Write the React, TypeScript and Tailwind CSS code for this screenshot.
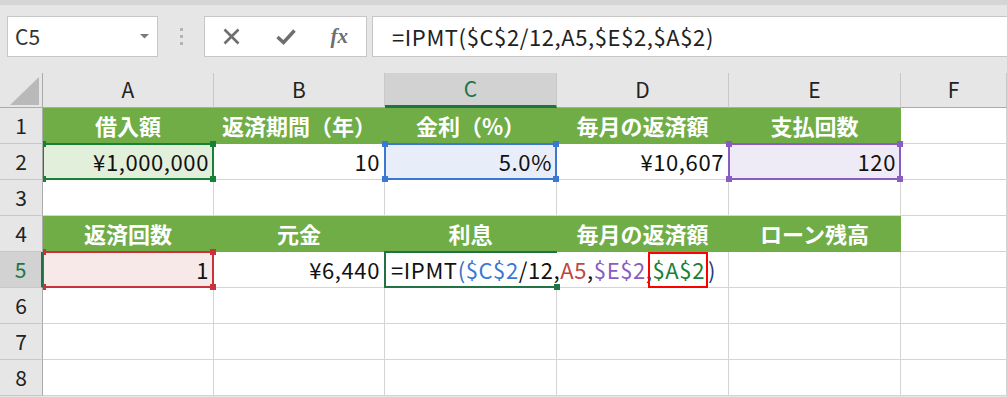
import React from "react";

const F = "font-['Noto_Sans_CJK_JP','Noto_Sans',sans-serif]";

function Handles({ bg }: { bg: string }) {
  const base = `absolute w-[6px] h-[6px] ${bg}`;
  return (
    <>
      <div className={`${base} -left-[4px] -top-[4px]`} />
      <div className={`${base} -right-[4px] -top-[4px]`} />
      <div className={`${base} -left-[4px] -bottom-[4px]`} />
      <div className={`${base} -right-[4px] -bottom-[4px]`} />
    </>
  );
}

function Sel({ border, bg }: { border: string; bg: string }) {
  return (
    <div className={`absolute -left-px -top-px -right-px -bottom-px border-2 z-10 pointer-events-none ${border}`}>
      <Handles bg={bg} />
    </div>
  );
}

function ColHead({ label, active }: { label: string; active?: boolean }) {
  return (
    <div
      className={`flex items-center justify-center text-[21px] border-r border-[#c8c8c8] ${
        active ? "bg-[#d2d2d2] text-[#217346] border-b-[3px] border-b-[#217346]" : "bg-[#e6e6e6] text-[#222] border-b border-b-[#ababab]"
      }`}
    >
      {label}
    </div>
  );
}

function RowHead({ n, active }: { n: number; active?: boolean }) {
  return (
    <div
      className={`relative z-20 flex items-center justify-center text-[21px] border-b border-[#c8c8c8] ${
        active ? "bg-[#d2d2d2] text-[#217346] border-r-2 border-r-[#217346]" : "bg-[#e6e6e6] text-[#222] border-r border-r-[#ababab]"
      }`}
    >
      {n}
    </div>
  );
}

function Green({ t }: { t: string }) {
  return (
    <div className="flex items-center justify-center bg-[#70ad47] border-r border-[#70ad47] border-b border-b-[#70ad47] text-white font-bold text-[22px]">
      {t}
    </div>
  );
}

function Cell({ t, cls = "", children }: { t?: string; cls?: string; children?: React.ReactNode }) {
  return (
    <div className={`relative flex items-center justify-end pr-[4px] text-[22px] tracking-[0.6px] text-[#111] border-r border-b border-[#d4d4d4] ${cls || "bg-white"}`}>
      {t}
      {children}
    </div>
  );
}

function Empty({ cls = "" }: { cls?: string }) {
  return <div className={`bg-white border-r border-b border-[#d4d4d4] ${cls}`} />;
}

export default function App() {
  return (
    <div className={`w-[1007px] h-[397px] overflow-hidden bg-[#e6e6e6] ${F}`}>
      <div className="h-[5px] bg-[#d5d5d5]" />
      {/* toolbar */}
      <div className="h-[68px] flex items-start pt-[11px]">
        <div className="ml-[7px] w-[151px] h-[41px] bg-white border border-[#c6c6c6] flex items-center pl-[7px] pr-[8px]">
          <span className="text-[21px] text-[#333]">C5</span>
          <svg className="ml-auto" width="9" height="5" viewBox="0 0 9 5">
            <polygon points="0,0 9,0 4.5,4.5" fill="#7a7a7a" />
          </svg>
        </div>
        <div className="w-[46px] h-[41px] flex flex-col items-center justify-center gap-[4px]">
          <div className="w-[3px] h-[3px] bg-[#b4b4b4]" />
          <div className="w-[3px] h-[3px] bg-[#b4b4b4]" />
          <div className="w-[3px] h-[3px] bg-[#b4b4b4]" />
        </div>
        <div className="w-[163px] h-[41px] bg-white border border-[#c6c6c6] flex items-center">
          <div className="w-[54px] flex justify-center">
            <svg width="17" height="17" viewBox="0 0 17 17">
              <path d="M1.5 1.5 L15.5 15.5 M15.5 1.5 L1.5 15.5" stroke="#6e6e6e" strokeWidth="2.6" />
            </svg>
          </div>
          <div className="w-[54px] flex justify-center">
            <svg width="20" height="16" viewBox="0 0 20 16">
              <path d="M1.5 8 L7.5 13.5 L18.5 1.5" stroke="#6e6e6e" strokeWidth="3.4" fill="none" />
            </svg>
          </div>
          <div className="w-[54px] flex justify-center">
            <span className="font-['Liberation_Serif',serif] italic font-bold text-[21px] text-[#6e6e6e] leading-none">fx</span>
          </div>
        </div>
        <div className="ml-[5px] flex-1 h-[41px] bg-white border border-r-0 border-[#c6c6c6] flex items-center pl-[19px] text-[22px] tracking-[0.6px] text-[#222] whitespace-nowrap">
          =IPMT($C$2/12,A5,$E$2,$A$2)
        </div>
      </div>

      {/* grid */}
      <div className="grid grid-cols-[43px_171px_171px_172px_172px_172px_1fr] grid-rows-[35px_repeat(8,36px)] bg-white">
        {/* header row */}
        <div className="relative bg-[#e6e6e6] border-r border-b border-[#ababab]">
          <svg className="absolute left-[10px] top-[4px]" width="30" height="28" viewBox="0 0 30 28">
            <polygon points="29,0 29,28 0,28" fill="#b9b9b9" />
          </svg>
        </div>
        <ColHead label="A" />
        <ColHead label="B" />
        <ColHead label="C" active />
        <ColHead label="D" />
        <ColHead label="E" />
        <ColHead label="F" />

        {/* row 1 */}
        <RowHead n={1} />
        <Green t="借入額" />
        <Green t="返済期間（年）" />
        <Green t="金利（%）" />
        <Green t="毎月の返済額" />
        <Green t="支払回数" />
        <Empty />

        {/* row 2 */}
        <RowHead n={2} />
        <Cell t="¥1,000,000" cls="bg-[#e2efda]">
          <Sel border="border-[#17813a]" bg="bg-[#17813a]" />
        </Cell>
        <Cell t="10" />
        <Cell t="5.0%" cls="bg-[#e8eef9]">
          <Sel border="border-[#3b78d4]" bg="bg-[#3b78d4]" />
        </Cell>
        <Cell t="¥10,607" />
        <Cell t="120" cls="bg-[#efebf6]">
          <Sel border="border-[#8a5cc2]" bg="bg-[#8a5cc2]" />
        </Cell>
        <Empty />

        {/* row 3 */}
        <RowHead n={3} />
        <Empty />
        <Empty />
        <Empty />
        <Empty />
        <Empty />
        <Empty />

        {/* row 4 */}
        <RowHead n={4} />
        <Green t="返済回数" />
        <Green t="元金" />
        <Green t="利息" />
        <Green t="毎月の返済額" />
        <Green t="ローン残高" />
        <Empty />

        {/* row 5 */}
        <RowHead n={5} active />
        <Cell t="1" cls="bg-[#f8e9e9]">
          <Sel border="border-[#c8333b]" bg="bg-[#c8333b]" />
        </Cell>
        <Cell t="¥6,440" />
        <div className="relative bg-white border-b border-[#d4d4d4]">
          <div className="absolute -left-px -top-px right-0 -bottom-px border-2 border-r-0 border-[#217346] z-10">
            <div className="absolute w-[6px] h-[6px] bg-[#217346] -right-[3px] -bottom-[4px]" />
          </div>
          <div className="absolute left-[6px] top-0 h-full flex items-center whitespace-nowrap z-20 text-[22px] tracking-[0.6px] text-[#111]">
            <span>=IPMT</span>
            <span className="text-[#3a6fc8]">(</span>
            <span className="text-[#3b78d4]">$C$2</span>
            <span>/12,</span>
            <span className="text-[#c0463f]">A5</span>
            <span>,</span>
            <span className="text-[#8a5cc2]">$E$2</span>
            <span>,</span>
            <span className="relative text-[#17813a] mr-[3px]">
              $A$2
              <span className="absolute -left-[5px] -right-[3px] top-1/2 -translate-y-1/2 h-[36px] border-2 border-[#ff0000]" />
            </span>
            <span className="text-[#1f3b80]">)</span>
          </div>
        </div>
        <Empty />
        <Empty />
        <Empty />

        {/* rows 6-8 */}
        {[6, 7, 8].map((n) => (
          <React.Fragment key={n}>
            <RowHead n={n} />
            <Empty />
            <Empty />
            <Empty />
            <Empty />
            <Empty />
            <Empty />
          </React.Fragment>
        ))}
      </div>
    </div>
  );
}
